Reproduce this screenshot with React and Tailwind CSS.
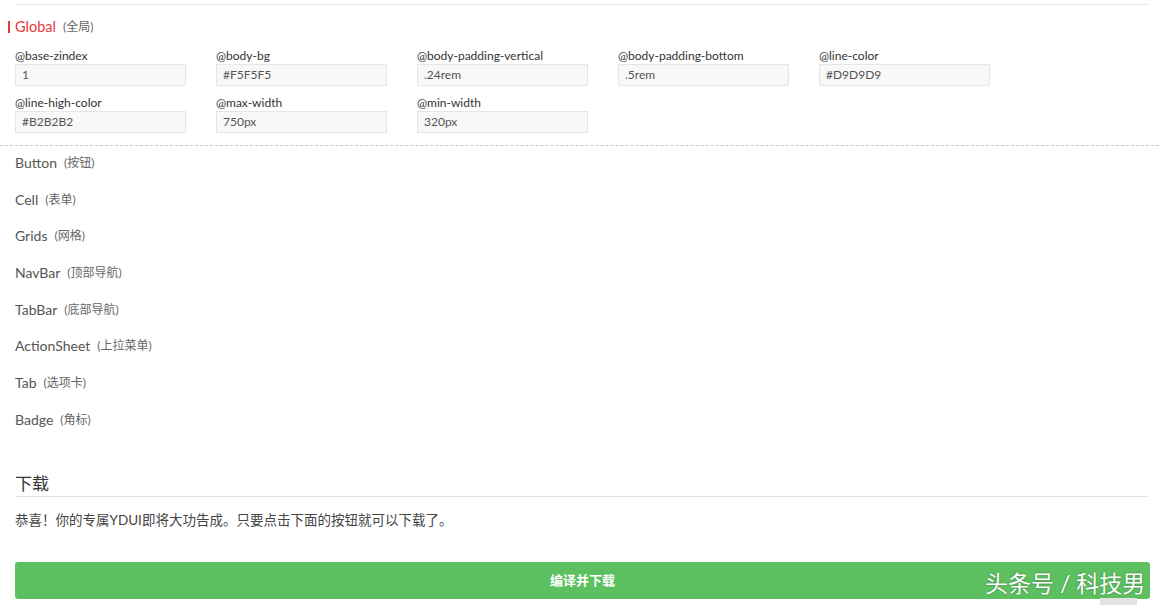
import React from "react";

const font = { fontFamily: 'Lato, "Noto Sans CJK SC", sans-serif' };

const vars = [
  ["@base-zindex", "1"],
  ["@body-bg", "#F5F5F5"],
  ["@body-padding-vertical", ".24rem"],
  ["@body-padding-bottom", ".5rem"],
  ["@line-color", "#D9D9D9"],
  ["@line-high-color", "#B2B2B2"],
  ["@max-width", "750px"],
  ["@min-width", "320px"],
];

const items = [
  ["Button", "(按钮)"],
  ["Cell", "(表单)"],
  ["Grids", "(网格)"],
  ["NavBar", "(顶部导航)"],
  ["TabBar", "(底部导航)"],
  ["ActionSheet", "(上拉菜单)"],
  ["Tab", "(选项卡)"],
  ["Badge", "(角标)"],
];

export default function App() {
  return (
    <div
      className="relative w-[1159px] h-[605px] overflow-hidden bg-white text-[#333]"
      style={font}
    >
      <div className="pt-[4px] pl-[15px] pr-[11px]">
        <div className="h-px bg-[#e8e8e8]" />
        <div className="relative mt-[12px] flex h-5 items-center">
          <span className="absolute left-[-7px] top-[4px] h-[12px] w-[2px] bg-[#e4393c]" />
          <span className="text-[14.5px] leading-5 text-[#e4393c]">Global</span>
          <span className="ml-[7px] text-[12px] leading-5 text-[#666]">(全局)</span>
        </div>
        <div className="mt-[11px] grid grid-cols-[repeat(5,171px)] gap-x-[30px] gap-y-[9px]">
          {vars.map(([k, v]) => (
            <div key={k} className="flex flex-col">
              <div className="h-4 text-[12px] leading-4 text-[#333]">{k}</div>
              <div className="flex h-[22px] items-center border border-[#e6e6e6] bg-[#f8f8f8] pl-[6px] text-[12px] text-[#555]">
                {v}
              </div>
            </div>
          ))}
        </div>
      </div>
      <div className="mt-[12px] border-t border-dashed border-[#c8c8c8]" />
      <div className="flex flex-col gap-[16.7px] pl-[15px] pt-[7px]">
        {items.map(([a, b]) => (
          <div key={a} className="flex h-5 items-center">
            <span className="text-[14px] leading-5 text-[#555]">{a}</span>
            <span className="ml-[7px] text-[12px] leading-5 text-[#666]">{b}</span>
          </div>
        ))}
      </div>
      <div className="pl-[15px] pr-[11px] pt-[42px]">
        <div className="border-b border-[#e3e3e3] text-[17px] leading-6 text-[#333]">下载</div>
        <div className="mt-[13px] text-[13.5px] leading-5 text-[#444]">
          恭喜！你的专属YDUI即将大功告成。只要点击下面的按钮就可以下载了。
        </div>
      </div>
      <div className="pl-[15px] pr-[9px] pt-[32px]">
        <button className="flex h-[37px] w-full items-center justify-center rounded-[3px] bg-[#5cbf60] text-[13px] font-bold text-white">
          编译并下载
        </button>
      </div>
      <div className="absolute left-[1100px] top-[598px] h-[7px] w-[37px] bg-[#e2e2e2]" />
      <div className="absolute left-[985px] top-[568px] text-[23px] leading-[30px] text-white [text-shadow:0_0_2px_rgba(0,0,0,0.35)]">
        头条号 / 科技男
      </div>
    </div>
  );
}
